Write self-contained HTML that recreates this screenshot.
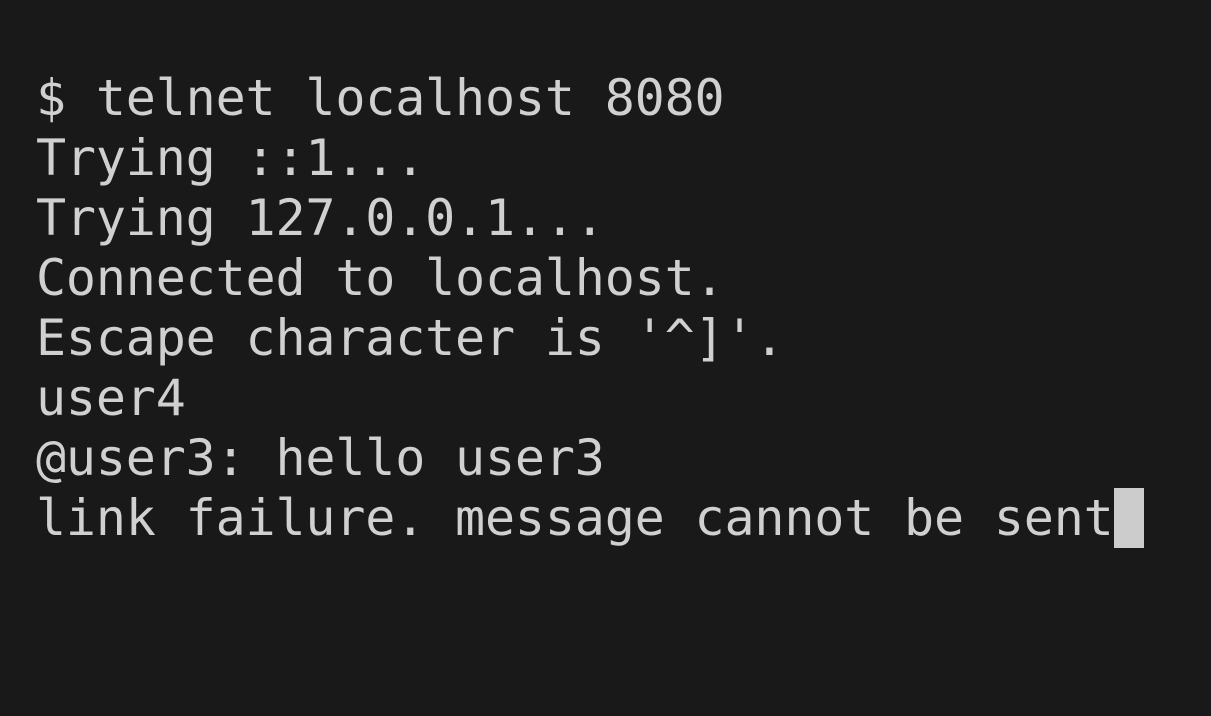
<!DOCTYPE html>
<html><head><style>
html,body{margin:0;padding:0;background:#191919;width:1211px;height:716px;overflow:hidden}
pre{position:absolute;left:36px;top:68px;margin:0;font-family:"DejaVu Sans Mono","Liberation Mono",monospace;font-size:50px;line-height:60px;color:#d0d0d0;letter-spacing:-0.17px;}
.c{display:inline-block;width:30px;height:60px;background:#cccccc;vertical-align:top}
</style></head><body>
<pre>$ telnet localhost 8080
Trying ::1...
Trying 127.0.0.1...
Connected to localhost.
Escape character is '^]'.
user4
@user3: hello user3
link failure. message cannot be sent<span class="c"></span></pre>
</body></html>
